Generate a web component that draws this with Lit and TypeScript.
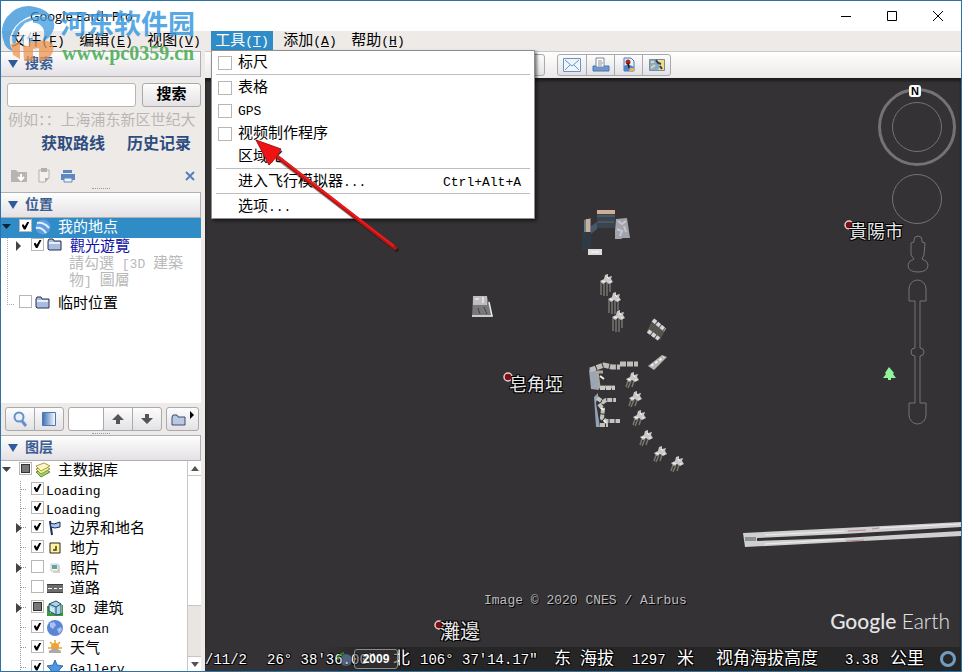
import { LitElement, html, svg, css, nothing, TemplateResult } from "lit";
import { customElement } from "lit/decorators.js";
import { classMap } from "lit/directives/class-map.js";

/** Wraps runs of Latin text so that they can be set smaller than the Chinese. */
const mix = (text: string) =>
  text
    .split(/([\x20-\x7e©°″]+)/)
    .filter((part) => part)
    .map((part) => (/^[\x20-\x7e©°″]+$/.test(part) ? html`<span class="latin">${part}</span>` : part));

const folder = html`<svg class="icon" width="16" height="16" viewBox="0 0 16 16">
  <path d="M1 4l1-2h4l1 2h7v9H2L1 12z" fill="#a9bbdf" stroke="#27304f" />
  <path d="M2 6h11" stroke="#e6edfb" stroke-width="2" />
</svg>`;

const icons: Record<string, TemplateResult> = {
  folder,
  earth: html`<svg class="icon" width="16" height="16" viewBox="0 0 16 16">
    <circle cx="8" cy="8" r="7.500" fill="#5f9be0" />
    <path d="M2 4q7-1 12 5M1 9q6-1 10 5" stroke="#e3effc" stroke-width="2" fill="none" />
  </svg>`,
  layers: html`<svg class="icon" width="16" height="16" viewBox="0 0 16 16">
    <path d="M1 10l9-3 5 3-9 5z" fill="#a9cf6c" stroke="#5f8a37" />
    <path d="M1 7l9-3 5 3-9 5z" fill="#e9f2a0" stroke="#8d9a3a" />
    <path d="M1 4l8-3 6 3-9 5z" fill="#fbf7c9" stroke="#b59a3c" />
  </svg>`,
  flag: html`<svg class="icon" width="16" height="16" viewBox="0 0 16 16">
    <path d="M3 1l2 14" stroke="#1c2c55" stroke-width="2" />
    <path d="M3 3l4 1 6-2v5l-5 1-4-1z" fill="#a8c8ee" stroke="#1c2c55" />
  </svg>`,
  place: html`<svg class="icon" width="16" height="16" viewBox="0 0 16 16">
    <path d="M3 3h10v10H3z" fill="#fff3a0" stroke="#2b2613" />
    <path d="M9 6v4H6" stroke="#4a3c10" fill="none" stroke-width="1.5" />
  </svg>`,
  photo: html`<svg class="icon" width="16" height="16" viewBox="0 0 16 16">
    <path d="M6 5h7v8H6z" fill="#d8d4d0" />
    <path d="M4 4h7v7H4z" fill="#fff" stroke="#c4c4c4" />
    <path d="M5 5h5v2H5z" fill="#5b9bd8" />
    <path d="M5 7h5v2H5z" fill="#5fae6c" />
  </svg>`,
  road: html`<svg class="icon" width="16" height="16" viewBox="0 0 16 16">
    <path d="M0 4h16v9H0z" fill="#6c6c6c" />
    <path d="M0 4.500h16M0 12.500h16" stroke="#3f3f3f" />
    <path d="M1 8.500h4M7 8.500h3M12 8.500h3" stroke="#fff" />
  </svg>`,
  building: html`<svg class="icon" width="16" height="16" viewBox="0 0 16 16">
    <path d="M0 6h3v9H0zM3 13h12V5h1v11H0v-2z" fill="#3f9a3a" />
    <path d="M2 4l7-3 5 3v10l-5 1-7-4z" fill="#a9d4ea" stroke="#234f67" />
    <path d="M2 4l7 3 5-3M9 7v8" stroke="#234f67" fill="none" />
    <path d="M4 7v4M6 8v4" stroke="#fff" />
  </svg>`,
  ocean: html`<svg class="icon" width="16" height="16" viewBox="0 0 16 16">
    <circle cx="8" cy="8" r="8" fill="#5b86d6" />
    <path d="M3 3l4-1 2 3-3 4-3-2zM10 9l4-2 1 3-3 4z" fill="#a9c3ee" />
  </svg>`,
  weather: html`<svg class="icon" width="16" height="16" viewBox="0 0 16 16">
    <path d="M8 0v4M1 8h3M3 2l3 3M13 2l-3 3M15 8h-3" stroke="#e9a23a" stroke-width="1.5" />
    <circle cx="8" cy="7" r="4" fill="#f0a22e" />
    <path d="M2 13a2 2 0 012-3q3-4 6 0 4-1 4 3z" fill="#a9a9ae" />
  </svg>`,
  star: html`<svg class="icon" width="16" height="16" viewBox="0 0 16 16">
    <path d="M8 0l2 5 6 1-4 4 1 6-5-3-5 3 1-6-4-4 6-1z" fill="#4f96de" stroke="#2f6cb5" />
  </svg>`,
};

interface Layer {
  name: string;
  icon?: string;
  state: "on" | "off" | "part";
  open?: boolean;
}

const layers: Layer[] = [
  { name: "Loading", state: "on" },
  { name: "Loading", state: "on" },
  { name: "边界和地名", icon: "flag", state: "on", open: true },
  { name: "地方", icon: "place", state: "on" },
  { name: "照片", icon: "photo", state: "off", open: true },
  { name: "道路", icon: "road", state: "off" },
  { name: "3D 建筑", icon: "building", state: "part", open: true },
  { name: "Ocean", icon: "ocean", state: "on" },
  { name: "天气", icon: "weather", state: "on" },
  { name: "Gallery", icon: "star", state: "on" },
];

const menus: [string, string][] = [
  ["文件", "F"],
  ["编辑", "E"],
  ["视图", "V"],
  ["工具", "T"],
  ["添加", "A"],
  ["帮助", "H"],
];

const status = [
  "/11/2", "26° 38'36.00″", "北", "106° 37'14.17″", "东", "海拔", "1297", "米", "视角海拔高度", "3.38", "公里",
];

const tower = (x: number, y: number, tall: boolean) => svg`<g transform="translate(${x} ${y})">
  ${tall
    ? svg`<path d="M-5 1v13M-2 2v13M1 2v13M4 1v10" stroke="#77766f" stroke-width="1.5"/>`
    : svg`<path d="M-4 2l-2 6M-1 2l-3 7M2 2l-2 6" stroke="#77766c" stroke-width="1.5"/>`}
  <path d="M-6 0l4-2 1-4 3-1 0 3 4-1-1 3 2 3-4 2-3-2-3 2z" fill="#c9c9c7"/>
  <path d="M-4 0l3 1M1-4l2 2M3 1h2" stroke="#f4f4f2"/>
</g>`;

@customElement("app-root")
export class AppRoot extends LitElement {
  static styles = css`
    :host {
      display: block;
      font: 15px/20px "Liberation Mono", "Noto Sans CJK SC", monospace;
      color: #000;
    }
    * { box-sizing: border-box; }
    button, input { font: inherit; color: inherit; margin: 0; padding: 0; border: 0; background: none; }
    svg { display: block; flex: none; }
    .latin { font-size: 13px; line-height: 16px; white-space: pre; }
    .window {
      position: relative;
      display: flex;
      flex-direction: column;
      height: 100vh;
      border: 1px solid #2a72a8;
      background: #eeeae7;
      overflow: hidden;
    }
    .title {
      display: flex;
      align-items: center;
      flex: none;
      height: 30px;
      padding-left: 29px;
      background: #fff;
      font: 13px/20px "Open Sans", sans-serif;
    }
    .title h1 { flex: 1; margin: 0; font: inherit; }
    .caption { display: grid; place-items: center; width: 46px; height: 30px; }
    .menubar { display: flex; gap: 6px; flex: none; height: 20px; padding-left: 6px; }
    .entry { position: relative; z-index: 3; }
    .entry > button { width: 62px; height: 19px; padding-top: 2px; line-height: 17px; white-space: nowrap; }
    .entry > button.active { background: #308cc6; color: #fff; }
    .popup {
      position: absolute;
      top: 19px;
      left: 0;
      width: 324px;
      padding: 0 4px;
      border: 1px solid #8e8e8e;
      background: #fff;
      box-shadow: 2px 2px 3px #0008;
    }
    .item { display: flex; align-items: center; width: 100%; height: 23px; padding-left: 2px; text-align: left; }
    .item > span { padding-top: 2px; }
    .item .name { flex: 1; }
    .item .name.bare { padding-left: 20px; }
    .item .keys { padding-right: 9px; }
    .item input { margin-right: 6px; }
    .popup hr { height: 1px; margin: 0 0 1px; border: 0; background: #bdbdbd; }
    input[type="checkbox"] {
      appearance: none;
      flex: none;
      display: grid;
      place-items: center;
      width: 14px;
      height: 14px;
      border: 1px solid #b9b6b4;
      background: #fff;
    }
    .tree input[type="checkbox"] { width: 13px; height: 13px; margin-bottom: 5px; }
    .tree input:checked::before {
      content: "";
      width: 8px;
      height: 8px;
      background: #000;
      clip-path: polygon(0 45%, 25% 35%, 40% 60%, 75% 0, 100% 0, 50% 100%, 30% 100%);
    }
    .tree input.part::before { content: ""; width: 7px; height: 7px; background: #777; border: 1px solid #333; }
    .body { display: flex; flex: 1; min-height: 0; }
    .side { display: flex; flex-direction: column; flex: none; width: 204px; padding-right: 4px; }
    .head {
      display: flex;
      align-items: center;
      gap: 7px;
      flex: none;
      height: 26px;
      margin: 0;
      padding-left: 7px;
      border: 1px solid #aeb0b4;
      border-left: 0;
      background: linear-gradient(#fefefe, #e4e1e4);
      color: #3c5d92;
      font-size: 14px;
      font-weight: 700;
    }
    .search { display: flex; gap: 6px; height: 24px; margin: 6px 0 0 6px; }
    .search input { flex: 1; min-width: 0; border: 1px solid #b5b5b5; border-radius: 3px; background: #fff; }
    .push { border: 1px solid #a9a9ac; border-radius: 3px; background: linear-gradient(#fdfdfd, #e3e1e4); }
    .search .push { width: 59px; padding-top: 2px; font-weight: 700; }
    .hint { height: 20px; margin: 5px 0 3px; padding-left: 7px; overflow: hidden; color: #b9b7b5; white-space: nowrap; }
    .links { display: flex; gap: 22px; padding-left: 40px; font-size: 16px; font-weight: 700; white-space: nowrap; }
    .links a { color: #2c4d7e; text-decoration: none; }
    .tools { display: flex; align-items: center; gap: 9px; height: 20px; margin-top: 11px; padding: 0 5px 0 9px; }
    .tools .close { margin-left: auto; }
    .grip { flex: none; width: 18px; height: 2px; margin: 0 auto; border-top: 1px dotted #999; }
    .search-end { margin: 2px auto 2px; }
    .tree { background: #fff; }
    .row { display: flex; align-items: center; height: 20px; white-space: nowrap; }
    .row > span { margin-top: 2px; }
    .row .icon { margin: 0 7px 3px 3px; }
    .places { position: relative; flex: none; height: 185px; }
    .places::before {
      content: "";
      position: absolute;
      top: 20px;
      left: 6px;
      width: 6px;
      height: 66px;
      border: dotted #aaa;
      border-width: 0 0 1px 1px;
    }
    .picked { background: #308cc6; color: #fff; }
    .tour { height: 17px; color: #1010a8; }
    .note { width: 136px; margin: 1px 0 4px 68px; color: #b9b9b9; line-height: 17px; }
    .pad { padding-left: 18px; }
    .bar { display: flex; gap: 4px; flex: none; height: 24px; margin: 4px 0 2px 4px; }
    .group { display: flex; border: 1px solid #a9a9b0; border-radius: 3px; background: linear-gradient(#fdfdfd, #e3e1e4); }
    .group > * { display: grid; place-items: center; width: 28px; }
    .group > * + * { width: 29px; border-left: 1px solid #a9a9b0; }
    .group .field { width: 34px; background: #fff; border-radius: 3px; }
    .group .wide { width: 31px; }
    .layers { display: flex; flex: 1; min-height: 0; overflow: hidden; }
    .layers .list { flex: 1; min-width: 0; }
    .short { height: 19px; }
    .short .name { padding-left: 2px; }
    .scroll {
      display: flex;
      flex-direction: column;
      width: 14px;
      border: solid #c9c6c4;
      border-width: 0 0 0 1px;
    }
    .scroll button { display: grid; place-items: center; flex: none; height: 14px; }
    .scroll .track { flex: 1; border-top: 1px solid #c9c6c4; }
    .scroll .thumb { height: 52px; border: solid #c9c6c4; border-width: 1px 0; background: #e9e5e3; }
    .view { display: flex; flex-direction: column; flex: 1; min-width: 0; }
    .toolbar {
      display: flex;
      gap: 12px;
      flex: none;
      height: 27px;
      padding: 2px 0 2px 310px;
      border-top: 1px solid #c9c9c9;
      background: linear-gradient(#fff, #ece9e7);
    }
    .toolbar .group > * { width: 28px; }
    .globe { position: relative; flex: 1; overflow: hidden; background: #343235; box-shadow: inset 0 3px 3px #1c1b1d; color: #fff; }
    .scene { position: absolute; top: 0; left: 0; }
    .nav { position: absolute; top: 0; right: 0; }
    .town { position: absolute; font-size: 18px; color: #e6e6e6; text-shadow: 1px 1px #000, -1px 1px #000, 1px -1px #000, -1px -1px #000; }
    .town-a { top: 298px; left: 304px; }
    .town-b { top: 145px; left: 644px; }
    .town-c { top: 546px; left: 235px; font-size: 20px; }
    .credit { position: absolute; bottom: 60px; left: 279px; color: #bcbcbc; text-shadow: 1px 1px #000; }
    .brand { position: absolute; right: 11px; bottom: 36px; font: 21px/28px Lato, sans-serif; color: #e4e4e4; }
    .brand b { font-weight: 500; }
    .brand span { font-weight: 300; }
    .status {
      position: absolute;
      inset: auto 0 0 0;
      display: grid;
      grid-template-columns: 62px 126px 27px 134px 26px 52px 45px 39px 129px 45px 49px 1fr;
      align-items: center;
      height: 24px;
      background: linear-gradient(90deg, #343235 120px, #272627 160px);
      font-size: 17px;
      white-space: nowrap;
      text-shadow: 1px 1px #000, -1px 1px #000, 1px -1px #000;
    }
    .status > span { padding-top: 2px; }
    .status .latin { font-size: 14px; }
    .year {
      position: absolute;
      left: 149px;
      bottom: 2px;
      width: 44px;
      height: 20px;
      border: 1px solid #8c8c8c;
      border-radius: 3px;
      background: #34323588;
      font: 700 12px/18px "Liberation Sans", sans-serif;
    }
    .history { position: absolute; left: 132px; bottom: 4px; opacity: 0.8; }
    .mark { position: absolute; top: 2px; left: 0; z-index: 4; display: flex; pointer-events: none; }
    .mark-logo { opacity: 0.75; }
    .mark-text { display: flex; flex-direction: column; margin-left: 1px; padding-top: 9px; }
    .mark-name { font-size: 27px; line-height: 30px; font-weight: 700; color: #3a9ae0; opacity: 0.85; }
    .mark-site { padding-left: 2px; font: 700 20px/22px "Liberation Serif", serif; color: #4fae5a; opacity: 0.9; }
    .pointer { position: absolute; top: 134px; left: 250px; z-index: 4; pointer-events: none; }
  `;

  private head(text: string) {
    return html`<h2 class="head">
      <svg width="10" height="8" viewBox="0 0 10 8"><path d="M0 0h10L5 8z" fill="#2f5b9c" /></svg>${text}
    </h2>`;
  }

  private popup() {
    const check = (name: string) =>
      html`<label class="item"><input type="checkbox" /><span class="name">${mix(name)}</span></label>`;
    const plain = (name: string, keys = "") =>
      html`<button class="item"><span class="name bare">${mix(name)}</span><span class="keys">${mix(keys)}</span></button>`;
    return html`<div class="popup">
      ${check("标尺")}<hr />
      ${check("表格")}${check("GPS")}${check("视频制作程序")}${plain("区域化")}<hr />
      ${plain("进入飞行模拟器...", "Ctrl+Alt+A")}<hr />
      ${plain("选项...")}
    </div>`;
  }

  private layer(row: Layer) {
    return html`<label class=${classMap({ row: true, short: !row.icon })}>
      <svg width="30" height="20" viewBox="0 0 30 20">
        <path d="M19.5 0v20M20 8.500h5" stroke="#999" stroke-dasharray="1 1" fill="none" />
        ${row.open ? svg`<path d="M15 4l6 5-6 5z" fill="#444"/>` : nothing}
      </svg>
      <input type="checkbox" class=${row.state} .checked=${row.state === "on"} />
      ${row.icon ? icons[row.icon] : nothing}<span class="name">${mix(row.name)}</span>
    </label>`;
  }

  private side() {
    return html`<aside class="side">
      ${this.head("搜索")}
      <form class="search"><input type="text" aria-label="搜索" /><button type="button" class="push">搜索</button></form>
      <p class="hint">例如：：上海浦东新区世纪大</p>
      <nav class="links"><a href="#route">获取路线</a><a href="#history">历史记录</a></nav>
      <div class="tools">
        <button aria-label="保存">
          <svg width="18" height="16" viewBox="0 0 18 16">
            <path d="M1 2h5l2 2h9v10H1z" fill="#b7b4b1" />
            <path d="M11 6v5M8 9l3 3 3-3" stroke="#fff" stroke-width="2" fill="none" />
          </svg>
        </button>
        <button aria-label="复制">
          <svg width="14" height="16" viewBox="0 0 14 16">
            <path d="M2 2h10v8l-4 4H2z" fill="#f3f1ef" stroke="#b3b0ad" />
            <path d="M4 0h6v4H4zM8 14v-4h4z" fill="#b3b0ad" />
          </svg>
        </button>
        <button aria-label="打印">
          <svg width="16" height="16" viewBox="0 0 16 16">
            <path d="M3 2h9v3H3zM1 6h14v6H1z" fill="#6088c0" />
            <path d="M4 10h8v4H4z" fill="#eef3fb" stroke="#6088c0" />
          </svg>
        </button>
        <button class="close" aria-label="关闭">
          <svg width="12" height="12" viewBox="0 0 12 12"><path d="M2 2l8 8M10 2L2 10" stroke="#5282bd" stroke-width="2" /></svg>
        </button>
      </div>
      <div class="grip search-end"></div>
      ${this.head("位置")}
      <div class="tree places">
        <label class="row picked">
          <svg width="18" height="20" viewBox="0 0 18 20"><path d="M1 6h9L5.500 11z" fill="#123" /></svg>
          <input type="checkbox" checked />${icons.earth}<span>我的地点</span>
        </label>
        <label class="row tour">
          <svg width="30" height="17" viewBox="0 0 30 17"><path d="M15 3l5 5-5 5z" fill="#444" /></svg>
          <input type="checkbox" checked />${icons.folder}<span>觀光遊覽</span>
        </label>
        <p class="note">${mix("請勾選 [3D 建築物] 圖層")}</p>
        <label class="row pad"><input type="checkbox" />${icons.folder}<span>临时位置</span></label>
      </div>
      <div class="bar">
        <div class="group">
          <button aria-label="查找">
            <svg width="16" height="16" viewBox="0 0 16 16">
              <circle cx="7" cy="6" r="4.500" fill="#e7f0fb" stroke="#6790c8" stroke-width="2" />
              <path d="M10 10l4 5" stroke="#6790c8" stroke-width="3" />
            </svg>
          </button>
          <button aria-label="透明度">
            <svg width="14" height="14" viewBox="0 0 14 14">
              <defs><linearGradient id="fade"><stop stop-color="#3a6fb5" /><stop offset="1" stop-color="#fff" /></linearGradient></defs>
              <path d="M.5 .5h13v13H.5z" fill="url(#fade)" stroke="#4a78b5" />
            </svg>
          </button>
        </div>
        <div class="group">
          <input class="field" type="text" aria-label="数值" />
          <button aria-label="上移"><svg width="12" height="12" viewBox="0 0 12 12"><path d="M6 1l6 6H8v4H4V7H0z" fill="#555" /></svg></button>
          <button aria-label="下移"><svg width="12" height="12" viewBox="0 0 12 12"><path d="M6 11l6-6H8V1H4v4H0z" fill="#555" /></svg></button>
        </div>
        <div class="group">
          <button class="wide" aria-label="新建文件夹">
            <svg width="26" height="18" viewBox="0 0 26 18">
              <path d="M2 7l1-2h4l1 2h7v8H2z" fill="#b9c9e4" stroke="#3f4d6b" />
              <path d="M20 1l4 4-4 4z" />
            </svg>
          </button>
        </div>
      </div>
      <div class="grip"></div>
      ${this.head("图层")}
      <div class="tree layers">
        <div class="list">
          <label class="row">
            <svg width="18" height="20" viewBox="0 0 18 20"><path d="M1 6h9L5.500 11z" fill="#444" /></svg>
            <input type="checkbox" class="part" />${icons.layers}<span>主数据库</span>
          </label>
          ${layers.map((row) => this.layer(row))}
        </div>
        <div class="scroll">
          <button aria-label="向上"><svg width="8" height="5" viewBox="0 0 8 5"><path d="M4 0l4 5H0z" fill="#555" /></svg></button>
          <div class="track"></div>
          <div class="thumb"></div>
          <button aria-label="向下"><svg width="8" height="5" viewBox="0 0 8 5"><path d="M4 5l4-5H0z" fill="#555" /></svg></button>
        </div>
      </div>
    </aside>`;
  }

  private scene() {
    const pin = (x: number, y: number) =>
      svg`<circle cx=${x} cy=${y} r="4" fill="#7c0f14" stroke="#e6cfcb" stroke-width="1.500"/>`;
    return html`<svg class="scene" width="756" height="593" viewBox="205 78 756 593">
      <path d="M597 210h18v5h-18z" fill="#cfae93" />
      <path d="M597 214h18v14h-18z" fill="#39444e" />
      <path d="M597 216h18M598 222h16" stroke="#5c6c7a" />
      <path d="M584 220l7-2v15h-7z" fill="#6d7b88" />
      <path d="M586 219h4v13h-4z" fill="#c9b09c" />
      <path d="M591 226l6-4v7l-6 5z" fill="#485866" />
      <path d="M582 232h9v18h-9z" fill="#2f3a45" />
      <path d="M616 219l11-1 3 20-7 0-2 1-6 0 0-8z" fill="#a3a3ad" />
      <path d="M618 221l4 3 4-3M617 229l5 2-2 5M624 226l2 6" stroke="#c6c6ce" fill="none" stroke-width="2" />
      <path d="M588 249h14v6h-14z" fill="#dcdcdc" />
      <path d="M591 252h8" stroke="#fff" />
      ${tower(606, 281, true)}${tower(614, 299, true)}${tower(618, 317, true)}
      <path d="M473 296h14l6 21h-21z" fill="#77777c" />
      <path d="M473 296h14v9h-14z" fill="#bdbdbf" />
      <path d="M475 299h4M483 297v6M472 316h20l-3-14" stroke="#e9e9e9" fill="none" stroke-width="1.500" />
      <path d="M478 308l2 6M484 307l3 7" stroke="#444" />
      <path d="M653 319l13 10-6 11-13-9z" fill="#55544f" />
      <path d="M653 320l12 10M648 331l11 8" stroke="#d6d6d8" stroke-width="4" stroke-dasharray="4 1" />
      <path d="M648 366l14-11 5 2-13 13z" fill="#b5b5b2" />
      <path d="M651 366l13-9" stroke="#efefec" stroke-width="2" stroke-dasharray="3 2" />
      <path d="M589 370l7-1 3 21-8-1z" fill="#9ba5b5" />
      <path d="M590 370l14-5 8 2 8 0M620 364h18" stroke="#bdbdb9" stroke-width="5" stroke-dasharray="6 1" fill="none" />
      <path d="M597 371l2 16 16 0M597 372h6" stroke="#a7a7a3" stroke-width="3" fill="none" />
      <path d="M600 388h15" stroke="#c9c9c5" stroke-width="4" stroke-dasharray="5 1" />
      <path d="M594 397l4-4v4l-2 6 4 24h-4z" fill="#94a0b3" />
      <path d="M597 398l6 4 3-2h10M599 404l4 5-1 9 4 3h14M600 425h8" stroke="#c3c3bf" stroke-width="4" stroke-dasharray="5 1" fill="none" />
      <path d="M600 376l4 3M601 408l3 2M604 420l2 3" stroke="#f2f2ee" stroke-width="2" />
      ${[[632, 379], [635, 398], [639, 417], [646, 437], [660, 453], [677, 463]].map(([x, y]) => tower(x, y, false))}
      <path d="M743 533l100-5 118-6v5l-118 7-86 4v3l86-3 118-7v5l-118 6-98 5z" fill="#cfcfcf" />
      <path d="M745 539h11" stroke="#8a9196" stroke-width="4" />
      <path d="M765 535l80-4M765 544l80-5M880 528l80-4" stroke="#efefef" />
      <path d="M848 531l18-1M846 541l18-1M872 529l7-1" stroke="#b98a8f" />
      <path d="M889 367l5 6-1 1 3 4h-5v2h-3v-2h-5l3-4-1-1z" fill="#8ff59a" />
      ${pin(508, 377)}${pin(849, 225)}${pin(439, 625)}
    </svg>`;
  }

  private nav() {
    return html`<svg class="nav" width="90" height="360" viewBox="871 78 90 360" fill="none" stroke="#747274">
      <circle cx="917" cy="127" r="37.500" stroke-width="3" />
      <circle cx="917" cy="127" r="24.500" />
      <circle cx="917" cy="199" r="24.500" />
      <path d="M914 240a4 4 0 0 1 8 0v2l3 1-1 12-2 4q6 2 6 6 0 7-10 7t-10-7q0-4 6-6l-3-4v-12l3-1z" />
      <path d="M909 301v-12a8.500 9 0 0 1 17 0v12h-6v47a4 4 0 0 1 0 8v47h6v12a8.500 9 0 0 1-17 0v-12h6v-47a4 4 0 0 1 0-8v-47z" />
      <rect x="909" y="85" width="12" height="12" rx="3" fill="#fff" stroke="none" />
      <text x="915" y="95" text-anchor="middle" font-family="Liberation Sans" font-size="11" font-weight="700" fill="#000" stroke="none">N</text>
    </svg>`;
  }

  private view() {
    return html`<main class="view">
      <div class="toolbar">
        <div class="group"><button aria-label="工具"></button></div>
        <div class="group">
          <button aria-label="电子邮件">
            <svg width="18" height="14" viewBox="0 0 18 14" fill="none" stroke="#6c93bd">
              <path d="M.5 .5h17v13H.5z" fill="#eef5fc" />
              <path d="M2 2l7 6 7-6M2 12l5-5M16 12l-5-5" />
            </svg>
          </button>
          <button aria-label="打印">
            <svg width="18" height="16" viewBox="0 0 18 16">
              <path d="M1 9h16v5H1z" fill="#6c97d3" stroke="#4a74b0" />
              <path d="M4 1h8v9H4z" fill="#fff" stroke="#7d8794" />
              <path d="M6 4h4M6 6h5M6 8h4" stroke="#8a8f96" />
            </svg>
          </button>
          <button aria-label="保存图像">
            <svg width="14" height="16" viewBox="0 0 14 16">
              <path d="M2 1h7l3 3v10H2z" fill="#eaf1fb" stroke="#4a78b5" />
              <path d="M2 9l4-2 6 3v4H2z" fill="#4f83c9" />
              <path d="M8 11h4v3H7z" fill="#e5b54c" />
              <circle cx="6" cy="5" r="2.500" fill="#a32a20" />
              <path d="M6 6l1 5" stroke="#3a1510" stroke-width="1.500" />
            </svg>
          </button>
          <button aria-label="在地图中查看">
            <svg width="16" height="12" viewBox="0 0 16 12">
              <path d="M.5 .5h15v11H.5z" fill="#86a9d2" stroke="#7c8c9c" />
              <path d="M8 1h7v10H9l2-3z" fill="#efe07a" />
              <path d="M7 1l2 3 3 1M11 7l2 3" stroke="#33425a" stroke-width="2" />
              <path d="M2 3h3M2 9l4-3" stroke="#e8d98a" stroke-width="2" />
            </svg>
          </button>
        </div>
      </div>
      <div class="globe">
        ${this.scene()}
        <div class="town town-a">皂角埡</div>
        <div class="town town-b">貴陽市</div>
        <div class="town town-c">灘邊</div>
        ${this.nav()}
        <div class="credit">${mix("Image © 2020 CNES / Airbus")}</div>
        <div class="brand"><b>Google</b> <span>Earth</span></div>
        <div class="status">
          ${status.map((text) => html`<span>${mix(text)}</span>`)}
          <svg width="18" height="18" viewBox="0 0 18 18"><circle cx="9" cy="9" r="6.500" fill="none" stroke="#6f9cc0" stroke-width="3" /></svg>
        </div>
        <svg class="history" width="16" height="16" viewBox="0 0 16 16">
          <circle cx="9" cy="9" r="6" fill="#7f9fd0" opacity=".6" /><path d="M1 9q0-6 6-7" stroke="#2c9a35" stroke-width="2" fill="none" />
        </svg>
        <button class="year">2009</button>
      </div>
    </main>`;
  }

  render() {
    return html`<div class="window">
      <header class="title">
        <h1>Google Earth Pro</h1>
        <button class="caption" aria-label="最小化"><svg width="12" height="12" viewBox="0 0 12 12"><path d="M1 6.500h10" stroke="#000" /></svg></button>
        <button class="caption" aria-label="最大化"><svg width="12" height="12" viewBox="0 0 12 12"><path d="M1.500 1.500h9v9h-9z" fill="none" stroke="#000" /></svg></button>
        <button class="caption" aria-label="关闭"><svg width="12" height="12" viewBox="0 0 12 12"><path d="M1 1l10 10M11 1L1 11" stroke="#000" /></svg></button>
      </header>
      <nav class="menubar">
        ${menus.map(
          ([name, key]) => html`<div class="entry">
            <button class=${classMap({ active: key === "T" })}>${name}<span class="latin">(<u>${key}</u>)</span></button>
            ${key === "T" ? this.popup() : nothing}
          </div>`
        )}
      </nav>
      <div class="body">${this.side()}${this.view()}</div>
      <div class="mark">
        <svg class="mark-logo" width="58" height="62" viewBox="0 0 58 62">
          <path d="M4 42Q-3 26 6 14 18 0 34 4q12 2 18 12-14-8-27-1Q12 22 9 34q-1 8 3 14-5-1-8-6z" fill="#2f8fd8" />
          <path d="M52 16q3 8-1 14-3 6-10 9 4-8 1-14-4-6-12-5-9 1-13 9-4 10 0 18-6-4-6-12 2-13 13-18 15-7 28-1z" fill="#3b9be0" />
          <path d="M21 29q4-6 11-7v16h10v5q-8 3-18 0-5-6-3-14z" fill="#4ba3e3" opacity=".8" />
          <path d="M10 41l9-2v17l-7-4zM22 41l10-3v20h-9zM38 38q10-2 14 4 2 9-6 14l-8 3V45l-6 1v-6z" fill="#ee9550" />
          <path d="M24 20l8-3v18h-4v8h-5V31l-6 8q0-12 7-19z" fill="#fff" />
        </svg>
        <div class="mark-text"><span class="mark-name">河东软件园</span><span class="mark-site">www.pc0359.cn</span></div>
      </div>
      <svg class="pointer" width="152" height="120" viewBox="251 135 152 120">
        <path d="M275 155L396 248" stroke="#0006" stroke-width="4" transform="translate(2 3)" />
        <path d="M275 155L395 248" stroke="#b31414" stroke-width="4" stroke-linecap="round" />
        <path d="M275 154L394 246" stroke="#ee1c1c" stroke-width="2" />
        <path d="M256 140l25 9-3 6-6 7-3 3z" fill="#ef1313" stroke="#a31414" />
      </svg>
    </div>`;
  }
}
